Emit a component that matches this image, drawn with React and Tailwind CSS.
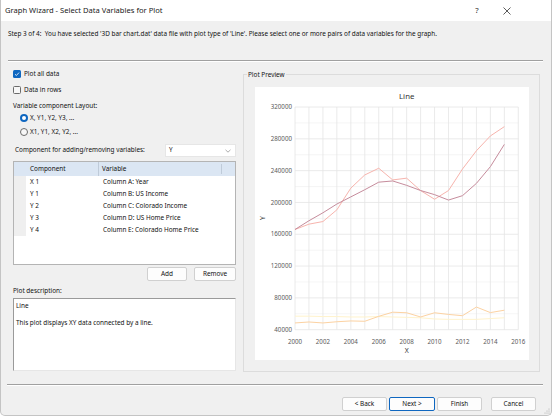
import React from 'react';

const series = [
  {
    color: '#fff3cc',
    data: [57000, 57000, 56500, 56500, 56000, 56000, 56500, 56000, 55500, 55000, 53500, 53000, 53000, 53000, 54000, 55000],
  },
  {
    color: '#fcd2a2',
    data: [48500, 49700, 48500, 50000, 51000, 50600, 56800, 62000, 61300, 56000, 61300, 59200, 57600, 68500, 61500, 64500],
  },
  {
    color: '#f7b4ad',
    data: [166000, 172700, 176000, 190700, 218000, 234600, 243000, 228300, 230500, 214900, 204000, 215000, 242000, 265000, 283600, 295300],
  },
  {
    color: '#c68c9c',
    data: [166000, 177000, 187000, 198000, 207000, 216000, 225500, 227000, 221500, 215000, 209800, 203000, 208500, 224000, 245000, 273000],
  },
];

function Chart() {
  const x0 = 40;
  const x1 = 263.3;
  const y0 = 20;
  const y1 = 242.7;
  const sx = (i) => x0 + (i * (x1 - x0)) / 16;
  const sy = (v) => y0 + ((320000 - v) / 280000) * (y1 - y0);

  const major = [320000, 280000, 240000, 200000, 160000, 120000, 80000, 40000];
  const minor = [300000, 260000, 220000, 180000, 140000, 100000, 60000];
  const cols = Array.from({ length: 17 }, (_, i) => i);
  const xLabels = [0, 2, 4, 6, 8, 10, 12, 14, 16];

  return (
    <svg width="274" height="273" viewBox="0 0 274 273" className="block">
      {minor.map((v) => (
        <line key={'m' + v} x1={x0} x2={x1} y1={sy(v)} y2={sy(v)} stroke="#f2f2f2" strokeWidth="0.8" />
      ))}
      {cols.map((i) => (
        <line key={'c' + i} x1={sx(i)} x2={sx(i)} y1={y0} y2={y1} stroke="#e4e4e4" strokeWidth="0.8" />
      ))}
      {major.map((v) => (
        <line key={'M' + v} x1={x0} x2={x1} y1={sy(v)} y2={sy(v)} stroke="#e4e4e4" strokeWidth="0.8" />
      ))}
      {series.map((s) => (
        <polyline
          key={s.color}
          fill="none"
          stroke={s.color}
          strokeWidth="1"
          points={s.data.map((v, i) => `${sx(i)},${sy(v)}`).join(' ')}
        />
      ))}
      <g fontFamily="Noto Sans, sans-serif" fontSize="6.2" fill="#595959">
        {major.map((v) => (
          <text key={'t' + v} x={x0 - 3} y={sy(v) + 2.2} textAnchor="end">
            {v}
          </text>
        ))}
        {xLabels.map((i) => (
          <text key={'x' + i} x={sx(i)} y={256.6} textAnchor="middle">
            {2000 + i}
          </text>
        ))}
      </g>
      <text x="151.7" y="12.3" textAnchor="middle" fontFamily="Noto Sans, sans-serif" fontSize="7.8" fill="#333">
        Line
      </text>
      <text x="151.7" y="266.2" textAnchor="middle" fontFamily="Noto Sans, sans-serif" fontSize="6.8" fill="#333">
        X
      </text>
      <text
        x="0"
        y="0"
        transform="translate(10 131) rotate(-90)"
        textAnchor="middle"
        fontFamily="Noto Sans, sans-serif"
        fontSize="6.8"
        fill="#333"
      >
        Y
      </text>
    </svg>
  );
}

function CheckBox({ checked, label }) {
  return (
    <div className="h-[10px] flex items-center gap-[3px]">
      {checked ? (
        <span className="w-[8px] h-[8px] rounded-[1.5px] bg-[#0f67c0] flex items-center justify-center">
          <svg width="6" height="6" viewBox="0 0 6 6">
            <path d="M1 3.2 L2.4 4.5 L5 1.6" fill="none" stroke="#fff" strokeWidth="0.8" />
          </svg>
        </span>
      ) : (
        <span className="w-[8px] h-[8px] rounded-[1.5px] border border-[#6b6b6b] bg-[#f7f7f7]" />
      )}
      <span>{label}</span>
    </div>
  );
}

function Radio({ checked, label }) {
  return (
    <div className="h-[10px] flex items-center gap-[2px] ml-[7px]">
      {checked ? (
        <span className="w-[8px] h-[8px] rounded-full bg-[#0f67c0] flex items-center justify-center">
          <span className="w-[3.5px] h-[3.5px] rounded-full bg-white" />
        </span>
      ) : (
        <span className="w-[8px] h-[8px] rounded-full border border-[#6b6b6b] bg-[#f7f7f7]" />
      )}
      <span>{label}</span>
    </div>
  );
}

function Button({ children, width, primary }) {
  return (
    <div
      className={
        'h-[14px] flex items-center justify-center rounded-[2px] bg-[#fdfdfd] border ' +
        (primary ? 'border-[#0f67c0]' : 'border-[#d0d0d0]') +
        ' ' +
        width
      }
    >
      {children}
    </div>
  );
}

const rows = [
  ['X 1', 'Column A: Year'],
  ['Y 1', 'Column B: US Income'],
  ['Y 2', 'Column C: Colorado Income'],
  ['Y 3', 'Column D: US Home Price'],
  ['Y 4', 'Column E: Colorado Home Price'],
];

export default function App() {
  return (
    <div className="w-[552px] h-[416px] bg-[#f0f0f0] flex flex-col border-l border-r border-b border-[#c4c4c4] rounded-b-[5px] overflow-hidden text-[6.4px] text-[#111] font-['Noto_Sans',sans-serif] leading-none relative">
      {/* title bar */}
      <div className="h-[21px] bg-white flex items-center pl-[4px] pr-[29px] shrink-0">
        <span className="text-[7.6px] text-[#1a1a1a]">Graph Wizard - Select Data Variables for Plot</span>
        <div className="ml-auto flex items-center">
          <span className="text-[7.8px] text-[#333] w-[10px] text-center">?</span>
          <span className="w-[30px] flex justify-center ml-[10px]">
            <svg width="8" height="8" viewBox="0 0 8 8">
              <path d="M0.5 0.5 L7.5 7.5 M7.5 0.5 L0.5 7.5" stroke="#333" strokeWidth="0.8" />
            </svg>
          </span>
        </div>
      </div>

      {/* step */}
      <div className="h-[39px] pl-[7px] pt-[10px] shrink-0">
        Step 3 of 4:&nbsp; You have selected '3D bar chart.dat' data file with plot type of 'Line'. Please select one or more pairs of data variables for the graph.
      </div>
      <div className="ml-[7px] mr-[8px] border-t border-[#a0a0a0] border-b border-b-white shrink-0" />

      {/* main */}
      <div className="flex gap-[7px] ml-[12px] shrink-0">
        <div className="w-[223px] flex flex-col">
          <div className="mt-[7px]">
            <CheckBox checked label="Plot all data" />
          </div>
          <div className="mt-[6px]">
            <CheckBox label="Data in rows" />
          </div>
          <div className="mt-[6px] h-[10px] flex items-center">Variable component Layout:</div>
          <div className="mt-[2px]">
            <Radio checked label="X, Y1, Y2, Y3, ..." />
          </div>
          <div className="mt-[4px]">
            <Radio label="X1, Y1, X2, Y2, ..." />
          </div>
          <div className="mt-[7px] h-[13px] flex items-center">
            <span className="ml-[2px]">Component for adding/removing variables:</span>
            <div className="ml-auto w-[71px] h-[13px] bg-white border border-[#e6e6e6] flex items-center pl-[3px] pr-[4px]">
              <span>Y</span>
              <svg className="ml-auto" width="6" height="4" viewBox="0 0 6 4">
                <path d="M0.5 0.8 L3 3.2 L5.5 0.8" fill="none" stroke="#888" strokeWidth="0.7" />
              </svg>
            </div>
          </div>

          {/* table */}
          <div className="mt-[4px] h-[104px] bg-white border border-[#b4b4b4] flex flex-col">
            <div className="h-[14px] bg-[#dbe6f3] flex items-center">
              <div className="w-[12px]" />
              <div className="w-[73px] pl-[4px] h-full flex items-center border-r border-[#bfcbd9]">Component</div>
              <div className="w-[123px] pl-[3px] h-[10px] flex items-center border-r border-[#bfcbd9]">Variable</div>
            </div>
            {rows.map(([a, b]) => (
              <div key={a} className="h-[12px] flex">
                <div className="w-[12px] bg-[#efefef]" />
                <div className="w-[73px] pl-[4px] flex items-center">{a}</div>
                <div className="pl-[4px] flex items-center">{b}</div>
              </div>
            ))}
          </div>

          <div className="mt-[2px] flex justify-end gap-[7px]">
            <Button width="w-[40px]">Add</Button>
            <Button width="w-[42px]">Remove</Button>
          </div>

          <div className="mt-[5px] h-[10px] flex items-center">Plot description:</div>
          <div className="mt-[2px] h-[73px] bg-white border-l border-t border-[#9a9a9a] border-r border-b border-r-[#e6e6e6] border-b-[#e6e6e6] pl-[2px] pt-[3px]">
            <div className="h-[8px] flex items-center">Line</div>
            <div className="mt-[9px] h-[8px] flex items-center">This plot displays XY data connected by a line.</div>
          </div>
        </div>

        {/* plot preview */}
        <div className="w-[297px] mt-[12px] h-[298px] border border-[#dcdcdc] relative pl-[11px] pt-[12px]">
          <span className="absolute left-[3px] top-[-5px] px-[1px] bg-[#f0f0f0] h-[10px] flex items-center">Plot Preview</span>
          <div className="w-[274px] h-[273px] bg-white">
            <Chart />
          </div>
        </div>
      </div>

      {/* bottom separator */}
      <div className="mt-[12px] ml-[6px] mr-[8px] border-t border-[#a0a0a0] border-b border-b-white shrink-0" />

      {/* buttons */}
      <div className="mt-[11px] flex justify-end pr-[15px] shrink-0">
        <Button width="w-[45px]">&lt; Back</Button>
        <div className="ml-[2px]">
          <Button width="w-[46px]" primary>
            Next &gt;
          </Button>
        </div>
        <div className="ml-[2px]">
          <Button width="w-[45px]">Finish</Button>
        </div>
        <div className="ml-[9px]">
          <Button width="w-[45px]">Cancel</Button>
        </div>
      </div>

      <svg className="absolute right-[1px] bottom-[1px]" width="6" height="6" viewBox="0 0 6 6">
        <circle cx="5" cy="1" r="0.5" fill="#a0a0a0" />
        <circle cx="3" cy="3" r="0.5" fill="#a0a0a0" />
        <circle cx="5" cy="3" r="0.5" fill="#a0a0a0" />
        <circle cx="1" cy="5" r="0.5" fill="#a0a0a0" />
        <circle cx="3" cy="5" r="0.5" fill="#a0a0a0" />
        <circle cx="5" cy="5" r="0.5" fill="#a0a0a0" />
      </svg>
    </div>
  );
}
